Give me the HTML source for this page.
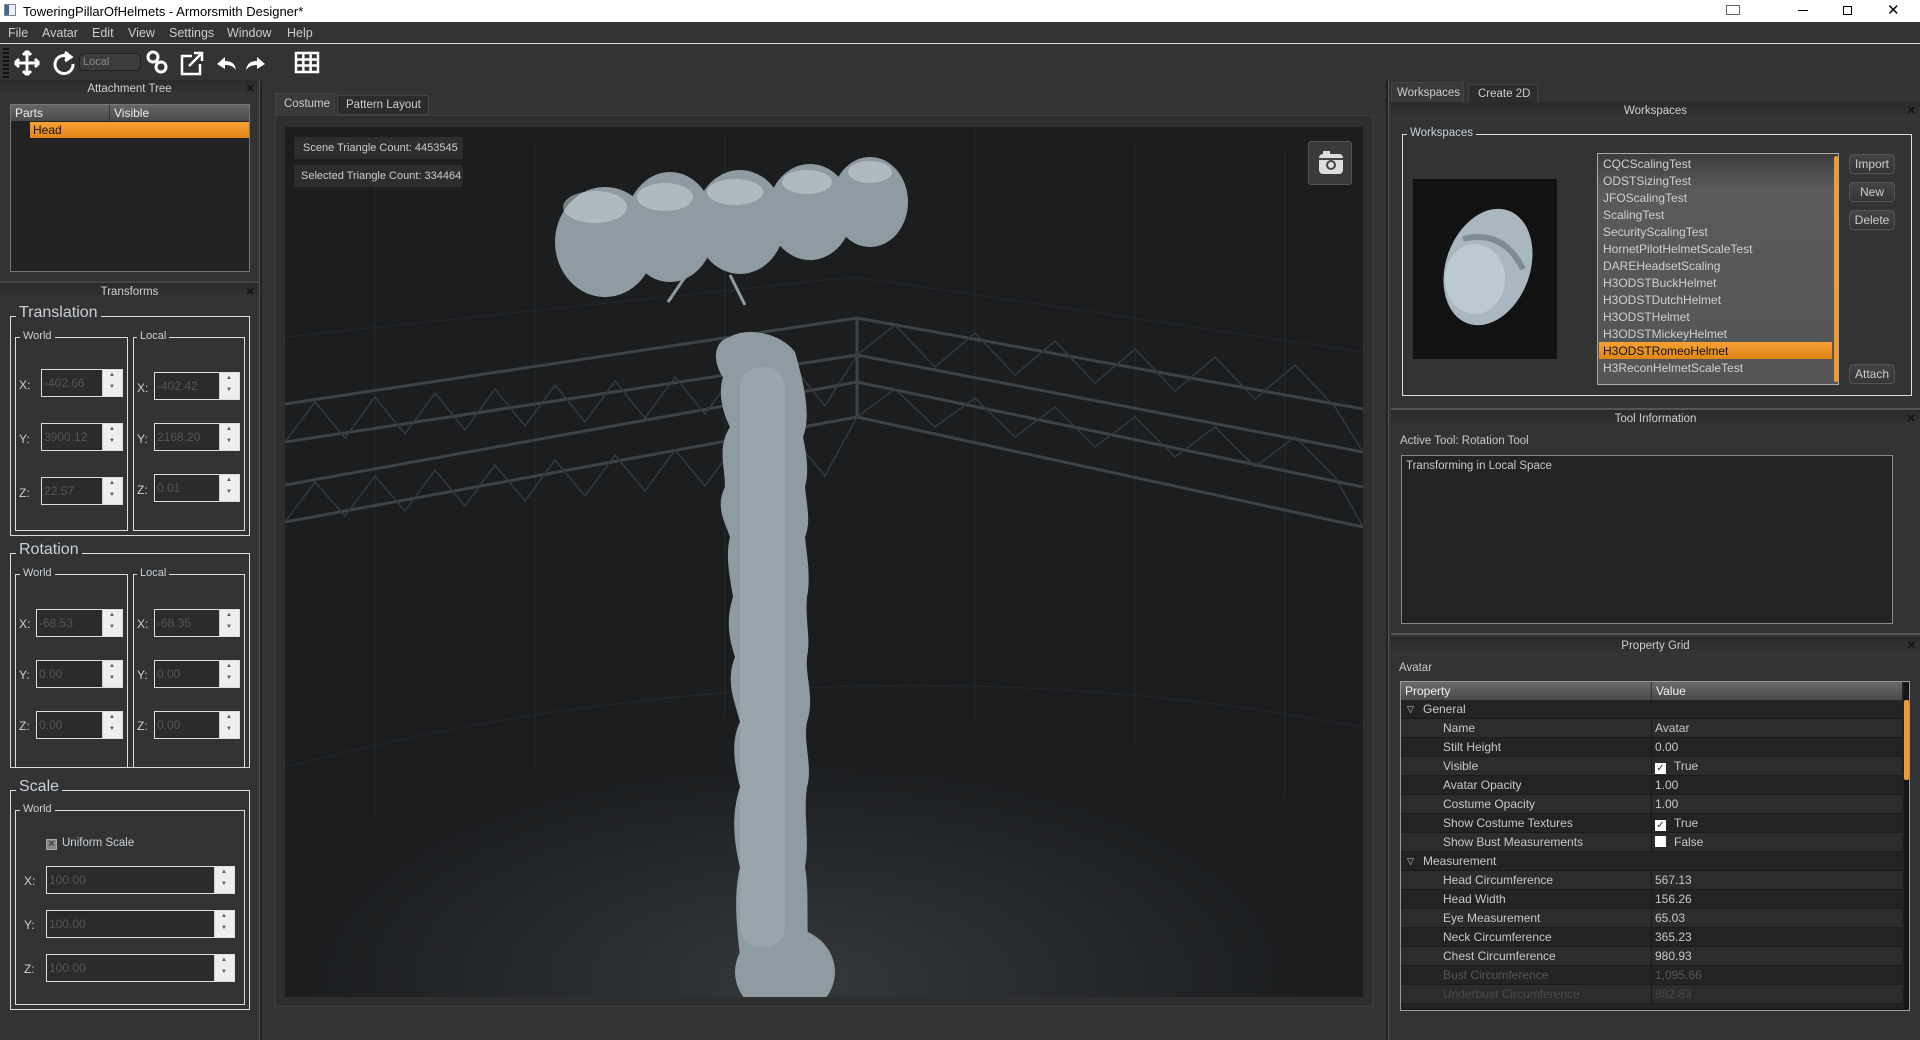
<!DOCTYPE html>
<html><head><meta charset="utf-8"><style>
*{box-sizing:border-box;margin:0;padding:0}
body{width:1920px;height:1040px;background:#333;font-family:"Liberation Sans",sans-serif;font-size:12px;color:#c8c8c8;position:relative;overflow:hidden}
.a{position:absolute;white-space:nowrap}
.title{left:0;top:0;width:1920px;height:22px;background:#fff;color:#000;font-size:13px}
.menu{top:22px;left:0;width:1920px;height:22px;background:#333;border-bottom:1px solid #ddd}
.menu span{position:absolute;top:4px;font-size:12.5px;color:#ccc}
.dock{text-align:center;font-size:11.5px;color:#cfcfcf;height:18px;line-height:18px;background:linear-gradient(#2a2a2a,#353535)}
.x{position:absolute;right:4px;top:0;font-size:11px;color:#111;font-weight:bold}
.gb{border:1px solid #ddd}
.gl{position:absolute;background:#333;padding:0 3px;color:#c8d0d8;white-space:nowrap}
.spin{position:absolute;height:28px;border:1px solid #ddd;background:#2b2b2b;color:#555;font-size:12px;padding:6px 2px}
.spin i{position:absolute;right:0;top:0;width:20px;height:26px;background:#eee;border-left:1px solid #ccc}
.spin i:before{content:"▲";position:absolute;left:6px;top:2px;font-size:6px;color:#555;font-style:normal}
.spin i:after{content:"▼";position:absolute;left:6px;top:14px;font-size:6px;color:#555;font-style:normal}
.lbl{position:absolute;color:#c8d0d8;font-size:12px}
.row{position:absolute;left:1401px;width:501px;height:19px;font-size:12px;line-height:19px;border-bottom:1px solid #1b1b1b;white-space:nowrap}
.row .k{position:absolute;left:42px}
.row .v{position:absolute;left:250px;border-left:1px solid #1b1b1b;padding-left:3px;height:19px;width:251px}
.btn{position:absolute;left:1849px;width:46px;height:20px;border:1px solid #555;border-radius:4px;background:linear-gradient(#444,#363636);color:#ccc;text-align:center;line-height:18px;font-size:12px}
.li{position:absolute;left:1603px;font-size:12px;color:#d0d0d0;white-space:nowrap}
.cb{display:inline-block;width:11px;height:11px;background:#fff;vertical-align:-1px;margin-right:8px;color:#333;font-size:10px;line-height:11px;text-align:center}
</style></head><body>
<div class="a title"><span class="a" style="left:4px;top:4px;width:12px;height:12px;border:1px solid #789;background:linear-gradient(90deg,#468 40%,#eee 40%)"></span><span class="a" style="left:23px;top:4px">ToweringPillarOfHelmets - Armorsmith Designer*</span>
<span class="a" style="left:1726px;top:5px;width:14px;height:10px;border:1px solid #666"></span>
<span class="a" style="left:1798px;top:10px;width:10px;height:1px;background:#000"></span>
<span class="a" style="left:1843px;top:6px;width:9px;height:9px;border:1px solid #000"></span>
<span class="a" style="left:1887px;top:1px;font-size:15px">✕</span></div>
<div class="a menu"><span style="left:8px">File</span><span style="left:42px">Avatar</span><span style="left:92px">Edit</span><span style="left:128px">View</span><span style="left:169px">Settings</span><span style="left:227px">Window</span><span style="left:287px">Help</span></div>
<!-- toolbar -->
<div class="a" style="left:0;top:45px;width:1920px;height:36px;background:#333"></div>
<div class="a" style="left:3px;top:48px;width:6px;height:30px;background:repeating-linear-gradient(#111 0 2px,#333 2px 4px)"></div>
<svg class="a" style="left:14px;top:48px" width="300" height="30" viewBox="0 0 300 30" fill="none" stroke="#fff" stroke-width="3">
<path d="M13 4v22M2 15h22M13 3l-4 4M13 3l4 4M13 27l-4-4M13 27l4-4M1 15l4-4M1 15l4 4M25 15l-4-4M25 15l-4 4"/>
<path d="M55 9a9 9 0 1 0 4 7" /><path d="M51 4l6 5-6 4" fill="#fff"/>
<rect x="134" y="4" width="10" height="10" rx="5" transform="rotate(45 139 9)"/><rect x="142" y="14" width="10" height="10" rx="5" transform="rotate(45 147 19)"/>
<path d="M178 8h-10v18h18v-10M175 18l12-12M180 5h8v8" stroke-width="2.5"/>
<path d="M203 16l8-7v4c7 0 10 3 11 9-3-4-6-5-11-5v4z" fill="#fff" stroke="none"/>
<path d="M251 16l-8-7v4c-7 0-10 3-11 9 3-4 6-5 11-5v4z" fill="#fff" stroke="none"/>
</svg>
<svg class="a" style="left:294px;top:51px" width="26" height="24" fill="none" stroke="#fff" stroke-width="2.5"><rect x="2" y="2" width="22" height="19"/><path d="M2 8.5h22M2 14.5h22M9.3 2v19M16.6 2v19"/></svg>
<div class="a" style="left:79px;top:53px;width:62px;height:18px;border-radius:5px;background:#3c3c3c;border:1px solid #222;color:#888;font-size:11px;padding:2px 3px">Local</div>

<!-- left panel -->
<div class="a dock" style="left:0;top:80px;width:259px">Attachment Tree<span class="x">✕</span></div>
<div class="a" style="left:10px;top:104px;width:240px;height:168px;background:#222;border:1px solid #777"></div>
<div class="a" style="left:11px;top:105px;width:238px;height:16px;background:linear-gradient(#666,#4a4a4a);color:#eee;font-size:12px"><span class="a" style="left:4px;top:1px">Parts</span><span class="a" style="left:98px;top:0;height:16px;border-left:1px solid #333;padding:1px 4px">Visible</span></div>
<div class="a" style="left:30px;top:122px;width:219px;height:16px;background:linear-gradient(#f7a034,#e08616);color:#111;font-size:12px;padding:1px 3px">Head</div>
<div class="a" style="left:0;top:281px;width:259px;height:2px;background:#444"></div>
<div class="a dock" style="left:0;top:283px;width:259px">Transforms<span class="x">✕</span></div>
<div class="a" style="left:259px;top:80px;width:3px;height:960px;background:#222;border-left:1px solid #555"></div>

<!-- Translation -->
<div class="a gb" style="left:10px;top:316px;width:240px;height:220px"></div><div class="gl" style="left:16px;top:304px;font-size:16px">Translation</div>
<div class="a gb" style="left:15px;top:337px;width:113px;height:194px"></div><div class="gl" style="left:20px;top:330px;font-size:11px">World</div>
<div class="a gb" style="left:133px;top:337px;width:112px;height:194px"></div><div class="gl" style="left:137px;top:330px;font-size:11px">Local</div>
<span class="lbl" style="left:19px;top:378px">X:</span><div class="spin" style="left:41px;top:369px;width:82px">-402.66<i></i></div>
<span class="lbl" style="left:19px;top:432px">Y:</span><div class="spin" style="left:41px;top:423px;width:82px">3900.12<i></i></div>
<span class="lbl" style="left:19px;top:486px">Z:</span><div class="spin" style="left:41px;top:477px;width:82px">22.57<i></i></div>
<span class="lbl" style="left:137px;top:381px">X:</span><div class="spin" style="left:154px;top:372px;width:86px">-402.42<i></i></div>
<span class="lbl" style="left:137px;top:432px">Y:</span><div class="spin" style="left:154px;top:423px;width:86px">2168.20<i></i></div>
<span class="lbl" style="left:137px;top:483px">Z:</span><div class="spin" style="left:154px;top:474px;width:86px">0.01<i></i></div>
<!-- Rotation -->
<div class="a gb" style="left:10px;top:553px;width:240px;height:215px"></div><div class="gl" style="left:16px;top:541px;font-size:16px">Rotation</div>
<div class="a gb" style="left:15px;top:574px;width:113px;height:194px"></div><div class="gl" style="left:20px;top:567px;font-size:11px">World</div>
<div class="a gb" style="left:133px;top:574px;width:112px;height:194px"></div><div class="gl" style="left:137px;top:567px;font-size:11px">Local</div>
<span class="lbl" style="left:19px;top:617px">X:</span><div class="spin" style="left:36px;top:609px;width:87px">-68.53<i></i></div>
<span class="lbl" style="left:19px;top:668px">Y:</span><div class="spin" style="left:36px;top:660px;width:87px">0.00<i></i></div>
<span class="lbl" style="left:19px;top:719px">Z:</span><div class="spin" style="left:36px;top:711px;width:87px">0.00<i></i></div>
<span class="lbl" style="left:137px;top:617px">X:</span><div class="spin" style="left:154px;top:609px;width:86px">-68.35<i></i></div>
<span class="lbl" style="left:137px;top:668px">Y:</span><div class="spin" style="left:154px;top:660px;width:86px">0.00<i></i></div>
<span class="lbl" style="left:137px;top:719px">Z:</span><div class="spin" style="left:154px;top:711px;width:86px">0.00<i></i></div>
<!-- Scale -->
<div class="a gb" style="left:10px;top:790px;width:240px;height:220px"></div><div class="gl" style="left:16px;top:778px;font-size:16px">Scale</div>
<div class="a gb" style="left:15px;top:810px;width:230px;height:195px"></div><div class="gl" style="left:20px;top:803px;font-size:11px">World</div>
<div class="a" style="left:46px;top:839px;width:11px;height:11px;background:#888;border:1px solid #aaa;color:#333;font-size:10px;line-height:9px;text-align:center">✕</div><span class="lbl" style="left:62px;top:837px;font-size:11.5px">Uniform Scale</span>
<span class="lbl" style="left:24px;top:874px">X:</span><div class="spin" style="left:46px;top:866px;width:189px">100.00<i></i></div>
<span class="lbl" style="left:24px;top:918px">Y:</span><div class="spin" style="left:46px;top:910px;width:189px">100.00<i></i></div>
<span class="lbl" style="left:24px;top:962px">Z:</span><div class="spin" style="left:46px;top:954px;width:189px">100.00<i></i></div>

<!-- center -->
<div class="a" style="left:275px;top:93px;width:60px;height:22px;background:#3a3a3a;border:1px solid #444;border-bottom:none;color:#ccc;font-size:11.5px;padding:4px 8px">Costume</div>
<div class="a" style="left:337px;top:95px;width:92px;height:20px;background:#2c2c2c;border:1px solid #444;color:#ccc;font-size:11.5px;padding:3px 8px">Pattern Layout</div>
<div class="a" style="left:275px;top:115px;width:1098px;height:892px;background:#2e2e2e;border:1px solid #3e3e3e"></div>
<div class="a" style="left:285px;top:127px;width:1078px;height:870px;background:radial-gradient(ellipse 55% 30% at 48% 98%,#34383b,#1b1d1f 85%),#1a1c1e;overflow:hidden">
<svg width="1078" height="870" viewBox="0 0 1078 870">
<g stroke="#25292c" stroke-width="1" fill="none">
<path d="M0 210 L570 150 L1078 225"/><path d="M0 640 Q540 500 1078 600"/>
<path d="M90 40V690M250 20V640M440 10V590M690 0V590M850 15V620M1000 25V670"/>
</g>
<g stroke="#3c4246" stroke-width="3" fill="none">
<path d="M0 277 L572 191 L1078 282"/><path d="M0 315 L572 228 L1078 325"/>
<path d="M0 358 L572 255 L1078 360"/><path d="M0 395 L572 290 L1078 400"/>
<path d="M572 191 V290"/>
</g>
<g stroke="#33393d" stroke-width="1.5" fill="none">
<path d="M0 315 L30 275 L60 311 L90 270 L120 307 L150 266 L180 303 L210 262 L240 299 L270 258 L300 295 L330 254 L360 291 L390 250 L420 287 L450 246 L480 283 L510 242 L540 279 L572 228"/>
<path d="M0 395 L30 355 L60 389 L90 349 L120 384 L150 343 L180 379 L210 338 L240 374 L270 333 L300 369 L330 328 L360 364 L390 323 L420 359 L450 318 L480 354 L510 313 L540 349 L572 290"/>
<path d="M572 228 L610 198 L650 240 L690 206 L730 248 L770 214 L810 256 L850 222 L890 264 L930 230 L970 272 L1010 238 L1050 280 L1078 325"/>
<path d="M572 290 L610 262 L650 300 L690 271 L730 310 L770 280 L810 320 L850 290 L890 330 L930 300 L970 340 L1010 310 L1050 350 L1078 400"/>
</g>
<g fill="#8f9ba3">
<ellipse cx="500" cy="845" rx="50" ry="45"/>
<path d="M445 210 C425 215 430 240 438 250 C432 270 440 290 445 300 C432 320 440 340 440 360 C430 380 440 395 445 410 C440 430 445 450 448 470 C440 495 445 515 450 530 C440 555 450 575 455 595 C445 615 450 640 455 660 C445 690 450 720 455 740 C448 770 452 800 455 830 L525 830 C520 800 525 770 520 740 C525 710 518 690 522 660 C528 640 518 615 522 595 C530 570 520 550 522 530 C526 510 520 495 522 470 C526 450 522 430 520 410 C526 395 522 380 520 360 C524 345 522 330 518 310 C526 290 520 260 510 225 C495 205 460 200 445 210Z"/>
<ellipse cx="320" cy="115" rx="50" ry="55"/>
<ellipse cx="385" cy="100" rx="45" ry="55"/>
<ellipse cx="455" cy="95" rx="45" ry="52"/>
<ellipse cx="525" cy="85" rx="42" ry="48"/>
<ellipse cx="585" cy="75" rx="38" ry="45"/>
</g>
<g fill="#c9d3d9" opacity=".55"><ellipse cx="310" cy="80" rx="32" ry="16"/><ellipse cx="380" cy="70" rx="28" ry="14"/><ellipse cx="450" cy="65" rx="28" ry="13"/><ellipse cx="522" cy="55" rx="25" ry="12"/><ellipse cx="585" cy="45" rx="22" ry="11"/><rect x="455" y="240" width="45" height="580" rx="20" opacity=".35"/></g>
<path d="M400 150 L383 175 M445 148 L460 178" stroke="#8f9ba3" stroke-width="3"/>
</svg>
</div>
<div class="a" style="left:294px;top:137px;width:169px;height:22px;background:#2d2d2d;color:#ccc;font-size:11px;padding:5px 9px">Scene Triangle Count: 4453545</div>
<div class="a" style="left:294px;top:165px;width:169px;height:22px;background:#2d2d2d;color:#ccc;font-size:11px;padding:5px 7px">Selected Triangle Count: 334464</div>
<div class="a" style="left:1308px;top:141px;width:44px;height:44px;background:#3a3a3a;border:1px solid #555;border-radius:3px">
<svg width="44" height="44"><rect x="10" y="12" width="24" height="20" rx="4" fill="#ddd"/><rect x="14" y="9" width="7" height="4" fill="#ddd"/><circle cx="22" cy="23" r="5" fill="#444"/><circle cx="22" cy="23" r="3" fill="#ddd"/><rect x="10" y="16" width="24" height="2" fill="#444"/></svg></div>

<!-- right panel -->
<div class="a" style="left:1386px;top:80px;width:3px;height:960px;background:#222;border-right:1px solid #555"></div>
<div class="a" style="left:1391px;top:82px;width:73px;height:22px;background:#3a3a3a;border:1px solid #444;border-bottom:none;color:#ccc;font-size:11.5px;padding:4px 5px">Workspaces</div>
<div class="a" style="left:1468px;top:84px;width:70px;height:20px;background:#2c2c2c;border:1px solid #444;color:#ccc;font-size:11.5px;padding:3px 9px">Create 2D</div>
<div class="a" style="left:1391px;top:103px;width:529px;height:1px;background:#888"></div>
<div class="a dock" style="left:1391px;top:102px;width:529px">Workspaces<span class="x">✕</span></div>
<div class="a gb" style="left:1402px;top:134px;width:510px;height:262px"></div><div class="gl" style="left:1407px;top:127px;font-size:11.5px">Workspaces</div>
<div class="a" style="left:1413px;top:179px;width:144px;height:180px;background:#121212"><svg width="144" height="180"><ellipse cx="75" cy="88" rx="42" ry="60" transform="rotate(20 75 88)" fill="#a9b8c0"/><ellipse cx="62" cy="100" rx="30" ry="35" fill="#c8d5dc" opacity=".6"/><path d="M50 60 Q90 50 110 90" stroke="#7d8c94" stroke-width="6" fill="none"/></svg></div>
<div class="a" style="left:1597px;top:153px;width:242px;height:232px;border:1px solid #aaa;background:linear-gradient(#3c3c3c,#5a5a5a 15%,#555)"></div>
<div class="a" style="left:1834px;top:156px;width:4px;height:226px;background:#f39a2a;border-radius:2px"></div>
<div class="li" style="top:157px">CQCScalingTest</div><div class="li" style="top:174px">ODSTSizingTest</div><div class="li" style="top:191px">JFOScalingTest</div><div class="li" style="top:208px">ScalingTest</div><div class="li" style="top:225px">SecurityScalingTest</div><div class="li" style="top:242px">HornetPilotHelmetScaleTest</div><div class="li" style="top:259px">DAREHeadsetScaling</div><div class="li" style="top:276px">H3ODSTBuckHelmet</div><div class="li" style="top:293px">H3ODSTDutchHelmet</div><div class="li" style="top:310px">H3ODSTHelmet</div><div class="li" style="top:327px">H3ODSTMickeyHelmet</div>
<div class="a" style="left:1599px;top:342px;width:233px;height:17px;background:linear-gradient(#f7a034,#e08616)"></div><div class="li" style="top:344px;color:#111">H3ODSTRomeoHelmet</div>
<div class="li" style="top:361px">H3ReconHelmetScaleTest</div>
<div class="btn" style="top:154px">Import</div><div class="btn" style="top:182px">New</div><div class="btn" style="top:210px">Delete</div><div class="btn" style="top:364px">Attach</div>

<div class="a" style="left:1391px;top:408px;width:529px;height:2px;background:#555"></div>
<div class="a dock" style="left:1391px;top:410px;width:529px">Tool Information<span class="x">✕</span></div>
<div class="a" style="left:1400px;top:435px;font-size:11.5px;color:#c8c8c8">Active Tool: Rotation Tool</div>
<div class="a" style="left:1401px;top:455px;width:492px;height:169px;background:#232323;border:1px solid #888;padding:4px;font-size:11.5px">Transforming in Local Space</div>

<div class="a" style="left:1391px;top:633px;width:529px;height:2px;background:#555"></div>
<div class="a dock" style="left:1391px;top:637px;width:529px">Property Grid<span class="x">✕</span></div>
<div class="a" style="left:1399px;top:662px;font-size:11.5px">Avatar</div>
<div class="a" style="left:1400px;top:681px;width:510px;height:330px;background:#222;border:1px solid #999;overflow:hidden"></div>
<div class="a" style="left:1401px;top:682px;width:501px;height:18px;background:linear-gradient(#6a6a6a,#4a4a4a);color:#f0f0f0;font-size:12px"><span class="a" style="left:4px;top:2px">Property</span><span class="a" style="left:250px;top:0;height:18px;border-left:1px solid #333;padding:2px 4px">Value</span></div>
<div class="a" style="left:1904px;top:683px;width:5px;height:326px;background:#151515"></div>
<div class="a" style="left:1904px;top:700px;width:5px;height:80px;background:#f39a2a;border-radius:2px"></div>
<div class="row" style="top:700px;background:#232323"><span class="a" style="left:6px;font-size:9px">▽</span><span class="a" style="left:22px">General</span></div>
<div class="row" style="top:719px;background:#2c2c2c"><span class="k">Name</span><span class="v">Avatar</span></div>
<div class="row" style="top:738px;background:#232323"><span class="k">Stilt Height</span><span class="v">0.00</span></div>
<div class="row" style="top:757px;background:#2c2c2c"><span class="k">Visible</span><span class="v"><span class="cb">✓</span>True</span></div>
<div class="row" style="top:776px;background:#232323"><span class="k">Avatar Opacity</span><span class="v">1.00</span></div>
<div class="row" style="top:795px;background:#2c2c2c"><span class="k">Costume Opacity</span><span class="v">1.00</span></div>
<div class="row" style="top:814px;background:#232323"><span class="k">Show Costume Textures</span><span class="v"><span class="cb">✓</span>True</span></div>
<div class="row" style="top:833px;background:#2c2c2c"><span class="k">Show Bust Measurements</span><span class="v"><span class="cb"></span>False</span></div>
<div class="row" style="top:852px;background:#232323"><span class="a" style="left:6px;font-size:9px">▽</span><span class="a" style="left:22px">Measurement</span></div>
<div class="row" style="top:871px;background:#2c2c2c"><span class="k">Head Circumference</span><span class="v">567.13</span></div>
<div class="row" style="top:890px;background:#232323"><span class="k">Head Width</span><span class="v">156.26</span></div>
<div class="row" style="top:909px;background:#2c2c2c"><span class="k">Eye Measurement</span><span class="v">65.03</span></div>
<div class="row" style="top:928px;background:#232323"><span class="k">Neck Circumference</span><span class="v">365.23</span></div>
<div class="row" style="top:947px;background:#2c2c2c"><span class="k">Chest Circumference</span><span class="v">980.93</span></div>
<div class="row" style="top:966px;background:#232323;color:#555"><span class="k">Bust Circumference</span><span class="v">1,095.66</span></div>
<div class="row" style="top:985px;background:#2c2c2c;color:#4a4a4a"><span class="k">Underbust Circumference</span><span class="v">882.83</span></div>
<div class="row" style="top:1004px;height:6px;background:#232323;overflow:hidden"></div>
</body></html>
